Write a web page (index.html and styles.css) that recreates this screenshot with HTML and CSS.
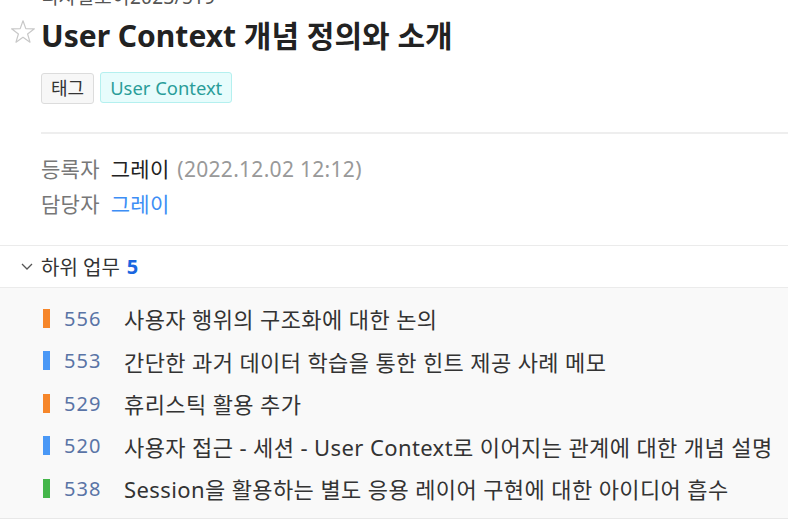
FILE: index.html
```html
<!DOCTYPE html>
<html lang="ko">
<head>
    <meta charset="UTF-8">
    <title>User Context 개념 정의와 소개</title>
    <meta name="viewport" content="width=device-width, initial-scale=1.0">
    <link rel="stylesheet" href="styles.css">
</head>
<body>
    <div class="detail">
        <div class="head">
            <div class="crumb">디자일로이2023/519</div>
            <div class="title-row">
                <span class="star">
                    <svg width="24" height="23" viewBox="0 0 24 23">
                        <polygon points="12,0.8 14.8,8.6 23.4,8.8 16.6,14 19,22.2 12,17.3 5,22.2 7.4,14 0.6,8.8 9.2,8.6" fill="none" stroke="#c8c8c8" stroke-width="1.2" stroke-linejoin="round"/>
                    </svg>
                </span>
                <h1>User Context 개념 정의와 소개</h1>
            </div>
            <div class="tags">
                <span class="tag">태그</span>
                <span class="tag tag-cyan">User Context</span>
            </div>
        </div>

        <div class="meta">
            <div class="meta-row">
                <span class="meta-label">등록자</span>
                <span class="meta-name">그레이</span>
                <span class="meta-date">(2022.12.02 12:12)</span>
            </div>
            <div class="meta-row">
                <span class="meta-label">담당자</span>
                <span class="meta-name link">그레이</span>
            </div>
        </div>

        <div class="sub-head">
            <svg class="chev" width="12" height="7" viewBox="0 0 12 7">
                <polyline points="1,1 6,6 11,1" fill="none" stroke="#555" stroke-width="1.3"/>
            </svg>
            <span>하위 업무</span>
            <b class="count">5</b>
        </div>

        <ul class="tasks">
            <li><i class="bar orange"></i><span class="num">556</span><span class="name">사용자 행위의 구조화에 대한 논의</span></li>
            <li><i class="bar blue"></i><span class="num">553</span><span class="name">간단한 과거 데이터 학습을 통한 힌트 제공 사례 메모</span></li>
            <li><i class="bar orange"></i><span class="num">529</span><span class="name">휴리스틱 활용 추가</span></li>
            <li><i class="bar blue"></i><span class="num">520</span><span class="name">사용자 접근 - 세션 - User Context로 이어지는 관계에 대한 개념 설명</span></li>
            <li><i class="bar green"></i><span class="num">538</span><span class="name">Session을 활용하는 별도 응용 레이어 구현에 대한 아이디어 흡수</span></li>
        </ul>
    </div>
</body>
</html>
```

FILE: styles.css
```css
body {
    margin: 0;
    font-family: "Noto Sans", "Noto Sans CJK KR", sans-serif;
    color: #333;
    background: #fff;
    overflow: hidden;
}
.head {
    padding-left: 41px;
}
.crumb {
    font-size: 19px;
    line-height: 24px;
    color: #555;
    margin-top: -15px;
    letter-spacing: 0.3px;
}
.title-row {
    display: flex;
    align-items: flex-start;
    margin-left: -41px;
    margin-top: 7px;
}
.star {
    width: 41px;
    padding: 4px 0 0 11px;
    box-sizing: border-box;
    display: flex;
}
h1 {
    margin: 0;
    font-size: 30px;
    line-height: 40px;
    font-weight: bold;
    color: #222;
}
.tags {
    display: flex;
    align-items: flex-start;
    gap: 6px;
    margin-top: 16px;
    padding-bottom: 28px;
    border-bottom: 2px solid #eee;
}
.tag {
    font-size: 18px;
    line-height: 29px;
    padding: 0 9px;
    border: 1px solid #dcdcdc;
    border-radius: 3px;
    background: #f7f7f7;
    color: #333;
    margin-top: 1px;
}
.tag-cyan {
    margin-top: 0;
    padding: 0 9px;
    font-size: 18.4px;
    background: #e7fcfc;
    border-color: #b4f0ef;
    color: #2a9d99;
}
.meta {
    padding: 18px 0 23px 41px;
    border-bottom: 1px solid #ebebeb;
}
.meta-row {
    font-size: 21px;
    line-height: 35px;
    letter-spacing: 0.3px;
}
.meta-label {
    color: #777;
    margin-right: 5px;
}
.meta-name {
    color: #222;
}
.meta-name.link {
    color: #3d8ef5;
}
.meta-date {
    color: #999;
    margin-left: 2px;
}
.sub-head {
    display: flex;
    align-items: center;
    height: 41px;
    padding-left: 21px;
    font-size: 20px;
    color: #333;
    border-bottom: 1px solid #ebebeb;
}
.chev {
    margin-right: 8px;
}
.count {
    color: #1a66e0;
    margin-left: 7px;
}
.tasks {
    list-style: none;
    margin: 0;
    padding: 9px 0 8px 43px;
    background: #f9f9f9;
    border-bottom: 1px solid #e8e8e8;
}
.tasks li {
    display: flex;
    align-items: center;
    height: 42.5px;
}
.bar {
    width: 7px;
    height: 19px;
    margin-right: 14px;
}
.orange { background: #f6862a; }
.blue { background: #4a98f6; }
.green { background: #44b64a; }
.num {
    width: 60px;
    font-size: 20px;
    letter-spacing: 1px;
    color: #5a74a6;
}
.name {
    font-size: 22px;
    letter-spacing: 0.4px;
    color: #333;
    white-space: nowrap;
}
```
